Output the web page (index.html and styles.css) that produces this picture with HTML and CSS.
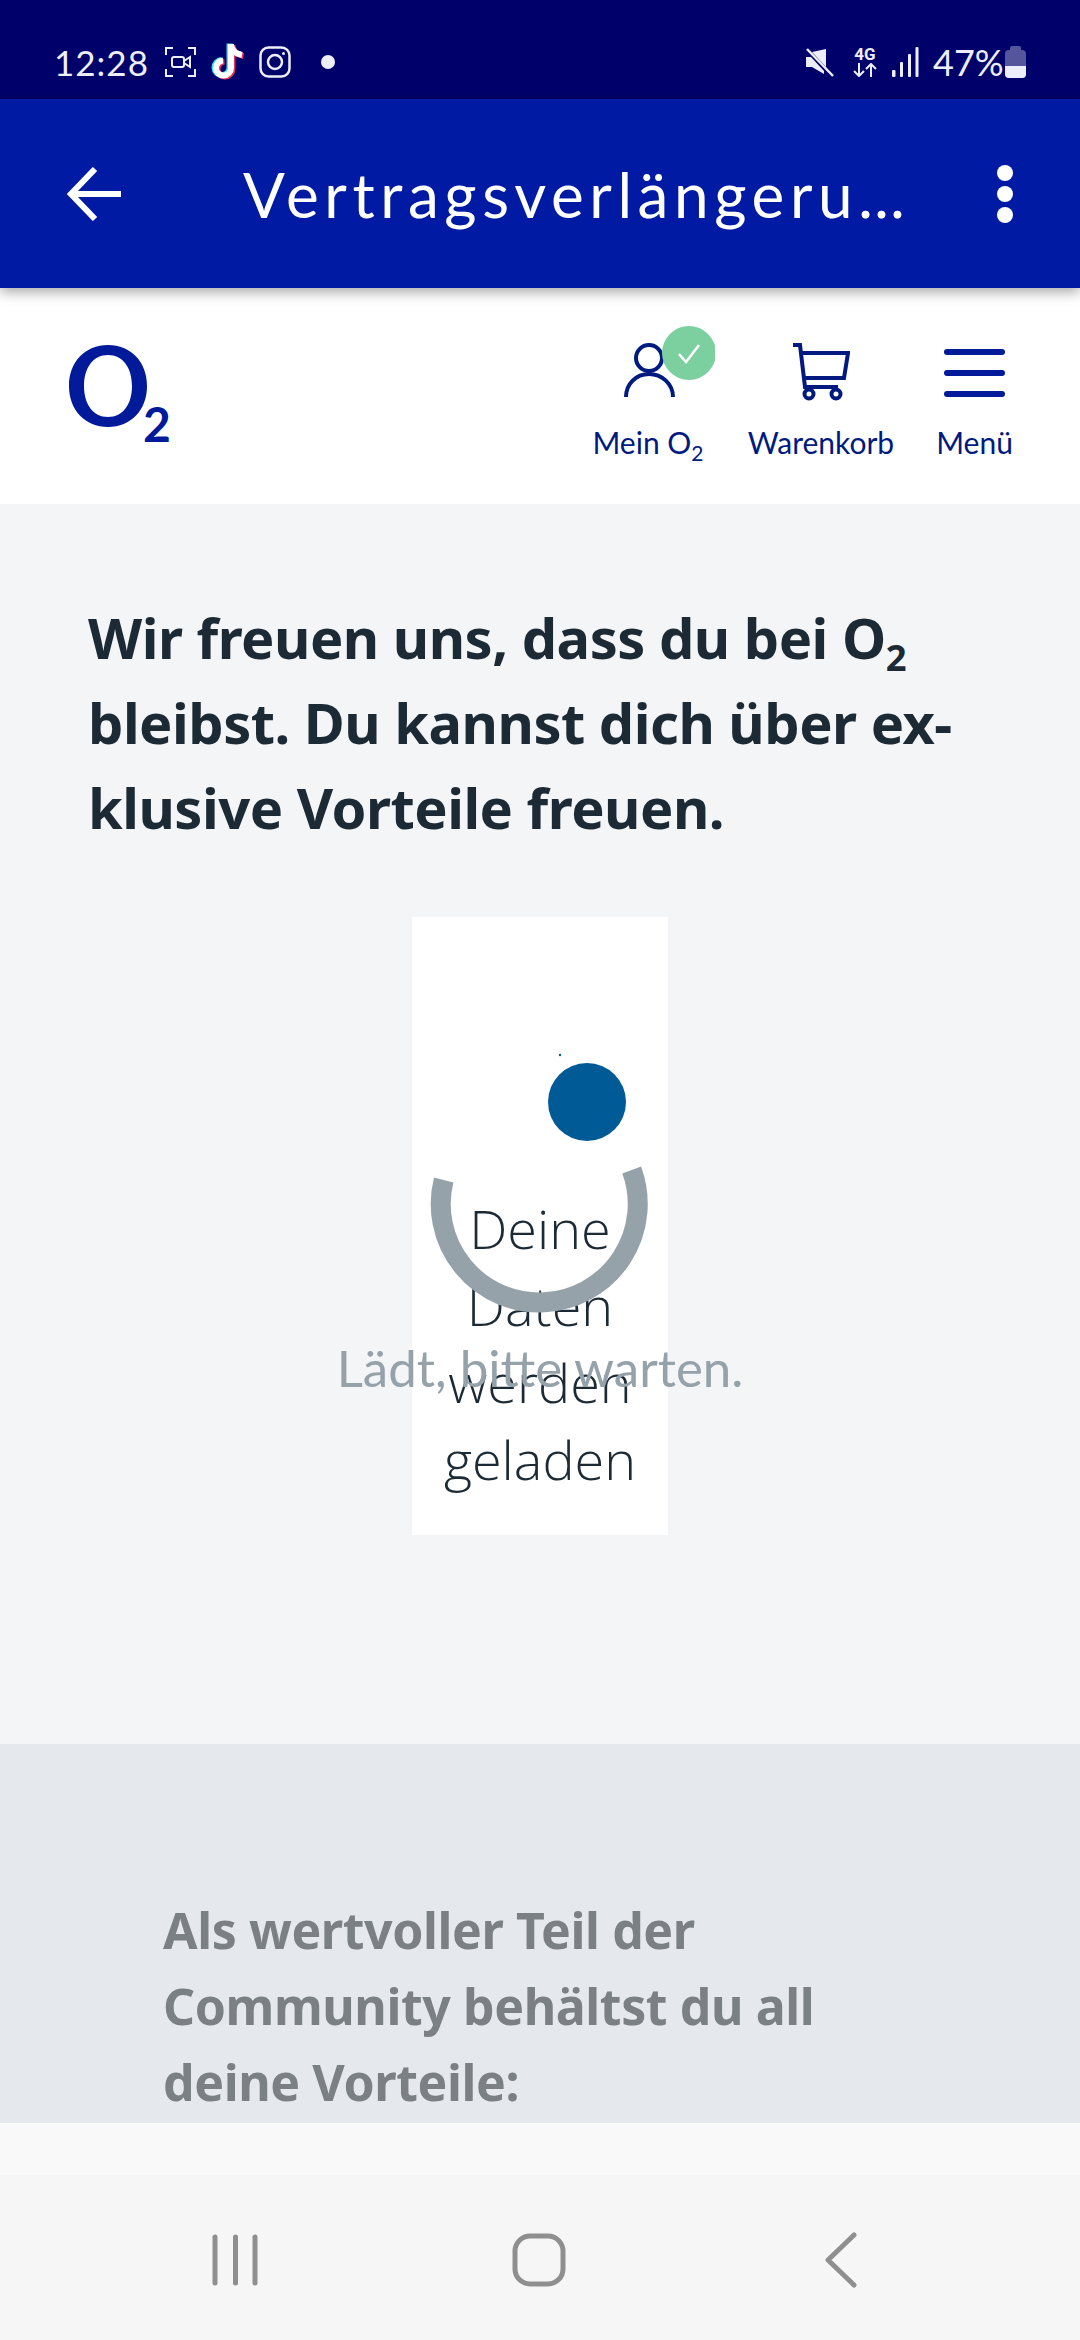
FILE: index.html
```html
<!DOCTYPE html>
<html lang="de">
<head>
  <meta charset="UTF-8" />
  <title>Vertragsverlängerung</title>
  <link rel="stylesheet" href="styles.css">
</head>
<body>
  <div class="status-bar">
    <span class="time">12:28</span>
    <svg class="st-rec" width="31" height="30" viewBox="0 0 31 30" fill="none" stroke="#eeeefa" stroke-width="2">
      <path d="M1 8V1h7M23 1h7v7M30 22v7h-7M8 29H1v-7"/>
      <rect x="7" y="10" width="12" height="10" rx="2"/>
      <path d="M19 14l6-4v10l-6-4"/>
    </svg>
    <svg class="st-tiktok" width="36" height="40" viewBox="0 0 36 40" fill="none" stroke-width="6">
      <path d="M21 3v24a7.500 7.500 0 1 1-8-7.500M21 4c1 6 5 9 11 10" stroke="#3fe0e8" transform="translate(-1.500 -.5)"/>
      <path d="M21 3v24a7.500 7.500 0 1 1-8-7.500M21 4c1 6 5 9 11 10" stroke="#e8305c" transform="translate(1.500 1)"/>
      <path d="M21 3v24a7.500 7.500 0 1 1-8-7.500M21 4c1 6 5 9 11 10" stroke="#fff"/>
    </svg>
    <svg class="st-insta" width="32" height="32" viewBox="0 0 32 32" fill="none" stroke="#eeeefa" stroke-width="2.500">
      <rect x="1.500" y="1.500" width="29" height="29" rx="8"/>
      <circle cx="16" cy="16" r="7"/>
      <circle cx="24.500" cy="7.500" r="1.500" fill="#eeeefa" stroke="none"/>
    </svg>
    <span class="st-dot"></span>
    <span class="st-spacer"></span>
    <svg class="st-mute" width="30" height="32" viewBox="0 0 30 32" fill="#eeeefa">
      <path d="M21 3v18L7 6zM1 11h5l13 14v3l-12-7H1z"/>
      <path d="M2 3l26 27" stroke="#eeeefa" stroke-width="2.500"/>
    </svg>
    <div class="st-net">
      <span class="st-4g">4G</span>
      <svg width="26" height="14" viewBox="0 0 26 14" fill="none" stroke="#eeeefa" stroke-width="2"><path d="M7 0v13M2 8l5 5 5-5M19 14V1M14 6l5-5 5 5"/></svg>
    </div>
    <svg class="st-signal" width="27" height="30" viewBox="0 0 27 30" fill="#eeeefa">
      <rect x="0" y="23" width="3.500" height="7" rx="1"/>
      <rect x="8" y="15" width="3" height="15" rx="1"/>
      <rect x="16" y="7" width="3" height="23" rx="1"/>
      <rect x="23.500" y="0" width="3" height="30" rx="1"/>
    </svg>
    <span class="battery-pct">47%</span>
    <div class="battery"><span class="battery-fill"></span></div>
  </div>

  <div class="app-bar">
    <svg class="app-back" width="56" height="54" viewBox="0 0 56 54" fill="none" stroke="#fff" stroke-width="6">
      <path d="M54 27H5M28 2L4 27l24 25"/>
    </svg>
    <div class="app-title">Vertragsverlängeru…</div>
    <div class="app-dots"><span></span><span></span><span></span></div>
  </div>

  <header class="site-header">
    <svg class="logo" width="110" height="110" viewBox="0 0 110 110">
      <path fill="#001a9a" fill-rule="evenodd" d="M40 0C17 0 1 17 1 41s16 41 39 41 39-17 39-41S63 0 40 0zm0 10c15 0 24 13 24 31s-9 31-24 31-24-13-24-31 9-31 24-31z"/>
      <text x="75" y="97" class="logo-two">2</text>
    </svg>
    <nav class="site-nav">
      <div class="nav-item nav-account">
        <div class="nav-icon">
          <svg width="96" height="76" viewBox="0 0 96 76" fill="none" stroke="#001a7f" stroke-width="4">
            <circle cx="30" cy="32" r="13"/>
            <path d="M7 71c0-13 10-23 23-23s24 10 24 23"/>
            <circle cx="70" cy="27" r="27" fill="#7ccf9e" stroke="none"/>
            <path d="M60 28l7 8 13-17" stroke="#fff" stroke-width="2.500"/>
          </svg>
        </div>
        <span>Mein O<sub>2</sub></span>
      </div>
      <div class="nav-item nav-cart">
        <div class="nav-icon">
          <svg width="58" height="58" viewBox="0 0 58 58" fill="none" stroke="#001a7f" stroke-width="4">
            <path d="M1 2h7l5 42h33"/>
            <path d="M9 10h47l-4 25H12"/>
            <circle cx="17" cy="51" r="4.500"/>
            <circle cx="44" cy="51" r="4.500"/>
          </svg>
        </div>
        <span>Warenkorb</span>
      </div>
      <div class="nav-item nav-menu">
        <div class="nav-icon burger"><span></span><span></span><span></span></div>
        <span>Menü</span>
      </div>
    </nav>
  </header>

  <main class="content">
    <h1>Wir freuen uns, dass du bei O<sub>2</sub> bleibst. Du kannst dich über ex&shy;klusive Vorteile freuen.</h1>
    <div class="loader-box">
      <p class="loader-text">Deine Daten werden geladen</p>
      <svg class="loader-art" width="256" height="618" viewBox="0 0 256 618" fill="none">
        <circle cx="175" cy="185" r="39" fill="#005a96"/>
        <circle cx="148" cy="138" r="1.200" fill="#005a96"/>
        <path d="M31.700 263A98.500 98.500 0 1 0 219.700 253" stroke="#95a2aa" stroke-width="20"/>
      </svg>
      <div class="loader-hint">Lädt, bitte warten.</div>
    </div>
  </main>

  <section class="benefits">
    <h2>Als wertvoller Teil der Community behältst du all deine Vorteile:</h2>
  </section>
  <div class="strip"></div>

  <div class="sys-nav">
    <svg width="46" height="52" viewBox="0 0 46 52" stroke="#8f8f8f" stroke-width="5" stroke-linecap="round">
      <path d="M3 3v46M23.500 3v46M43 3v46"/>
    </svg>
    <svg class="sys-home" width="54" height="54" viewBox="0 0 54 54" fill="none" stroke="#8f8f8f" stroke-width="5">
      <rect x="3" y="3" width="48" height="48" rx="15"/>
    </svg>
    <svg width="32" height="56" viewBox="0 0 32 56" fill="none" stroke="#8f8f8f" stroke-width="5" stroke-linecap="round" stroke-linejoin="round">
      <path d="M29 3L3 28l26 25"/>
    </svg>
  </div>
</body>
</html>
```

FILE: styles.css
```css
* {
  box-sizing: border-box;
}

html, body {
  margin: 0;
  padding: 0;
}

body {
  width: 1080px;
  height: 2340px;
  overflow: hidden;
  font-family: 'Lato', 'Open Sans', sans-serif;
  background: #f3f5f7;
}

/* status bar */
.status-bar {
  height: 99px;
  background: #00006b;
  color: #eeeefa;
  display: flex;
  align-items: center;
  padding: 24px 54px 0;
}

.time {
  font-size: 35px;
  letter-spacing: 1px;
  width: 111px;
}

.st-tiktok {
  margin-left: 14px;
  margin-top: -2px;
}

.st-insta {
  margin-left: 13px;
}

.st-dot {
  width: 14px;
  height: 14px;
  border-radius: 50%;
  background: #eeeefa;
  margin-left: 30px;
}

.st-spacer {
  flex: 1;
}

.st-net {
  display: flex;
  flex-direction: column;
  align-items: center;
  margin-left: 17px;
  width: 26px;
}

.st-4g {
  font-family: 'Roboto', sans-serif;
  font-weight: 700;
  font-size: 17px;
  line-height: 17px;
}

.st-signal {
  margin-left: 14px;
}

.battery-pct {
  font-size: 36px;
  margin-left: 14px;
  width: 72px;
}

.battery {
  position: relative;
  width: 21px;
  height: 28px;
  margin-top: 4px;
  border-radius: 4px;
  background: #55559c;
  display: flex;
  align-items: flex-end;
}

.battery::before {
  content: "";
  position: absolute;
  left: 5px;
  top: -4px;
  width: 11px;
  height: 5px;
  border-radius: 2px 2px 0 0;
  background: #55559c;
}

.battery-fill {
  display: block;
  width: 100%;
  height: 12px;
  border-radius: 0 0 4px 4px;
  background: #eeeefa;
}

/* app bar */
.app-bar {
  height: 189px;
  background: #001aa3;
  display: flex;
  align-items: center;
  padding: 0 67px;
  position: relative;
  box-shadow: 0 4px 12px rgba(0,0,0,0.35);
}

.app-title {
  color: #fff;
  font-size: 62px;
  letter-spacing: 5.6px;
  margin-left: 120px;
  width: 680px;
  white-space: nowrap;
}

.app-dots {
  display: flex;
  flex-direction: column;
  gap: 5px;
  margin-left: 74px;
}

.app-dots span {
  width: 16px;
  height: 16px;
  border-radius: 50%;
  background: #fff;
}

/* site header */
.site-header {
  height: 216px;
  background: #fff;
  display: flex;
  justify-content: space-between;
  padding: 0 68px;
}

.logo {
  margin-top: 57px;
}

.logo-two {
  font-family: 'Lato', sans-serif;
  font-weight: 700;
  font-size: 48px;
  fill: #001a9a;
}

.site-nav {
  display: flex;
  margin-top: 50px;
  color: #001a7f;
  font-size: 30px;
}

.nav-item {
  display: flex;
  flex-direction: column;
  align-items: center;
  white-space: nowrap;
}

.nav-account {
  width: 110px;
}

.nav-cart {
  margin-left: 44px;
  width: 148px;
}

.nav-menu {
  margin-left: 42px;
  width: 75px;
}

.nav-icon {
  height: 86px;
  margin-bottom: 0;
  display: flex;
  align-items: flex-start;
}

.nav-account .nav-icon svg {
  margin-left: 37px;
  margin-top: -12px;
}

.nav-cart .nav-icon svg {
  margin-top: 5px;
}

.nav-item sub {
  font-size: 0.7em;
  line-height: 0;
}

.burger {
  flex-direction: column;
  gap: 15px;
  padding-top: 11px;
}

.burger span {
  display: block;
  width: 61px;
  height: 6px;
  border-radius: 3px;
  background: #001a9a;
}

/* main */
.content {
  height: 1240px;
  padding: 0 88px;
  background: #f3f5f7;
}

h1 {
  margin: 0;
  padding-top: 91px;
  font-family: 'Noto Sans', sans-serif;
  font-size: 56px;
  letter-spacing: -0.5px;
  line-height: 85px;
  font-weight: 700;
  color: #1c2a35;
  width: 900px;
}

h1 sub {
  font-size: 0.65em;
  line-height: 0;
}

.loader-box {
  position: relative;
  width: 256px;
  height: 618px;
  margin: 0 auto;
  margin-top: 67px;
  background: #fff;
  padding-top: 273px;
}

.loader-text {
  margin: 0;
  text-align: center;
  font-family: 'Open Sans', sans-serif;
  font-size: 54px;
  font-weight: 300;
  line-height: 77px;
  color: #1c2a35;
}

.loader-art {
  position: absolute;
  left: 0;
  top: 0;
}

.loader-hint {
  position: absolute;
  left: -122px;
  width: 500px;
  top: 420px;
  text-align: center;
  font-size: 51px;
  color: #95a2aa;
  white-space: nowrap;
}

/* benefits */
.benefits {
  height: 379px;
  background: #e5e9ed;
  padding: 148px 163px 0;
  overflow: hidden;
}

h2 {
  margin: 0;
  font-family: 'Noto Sans', sans-serif;
  font-size: 50px;
  letter-spacing: -0.4px;
  line-height: 76px;
  font-weight: 700;
  color: #7a8084;
  width: 700px;
}

.strip {
  height: 52px;
  background: #f9f9f9;
}

/* android nav */
.sys-nav {
  height: 165px;
  background: #f6f6f6;
  display: flex;
  align-items: center;
  padding: 5px 223px 0 212px;
  justify-content: space-between;
}

.sys-home {
  margin-right: 5px;
}
```
